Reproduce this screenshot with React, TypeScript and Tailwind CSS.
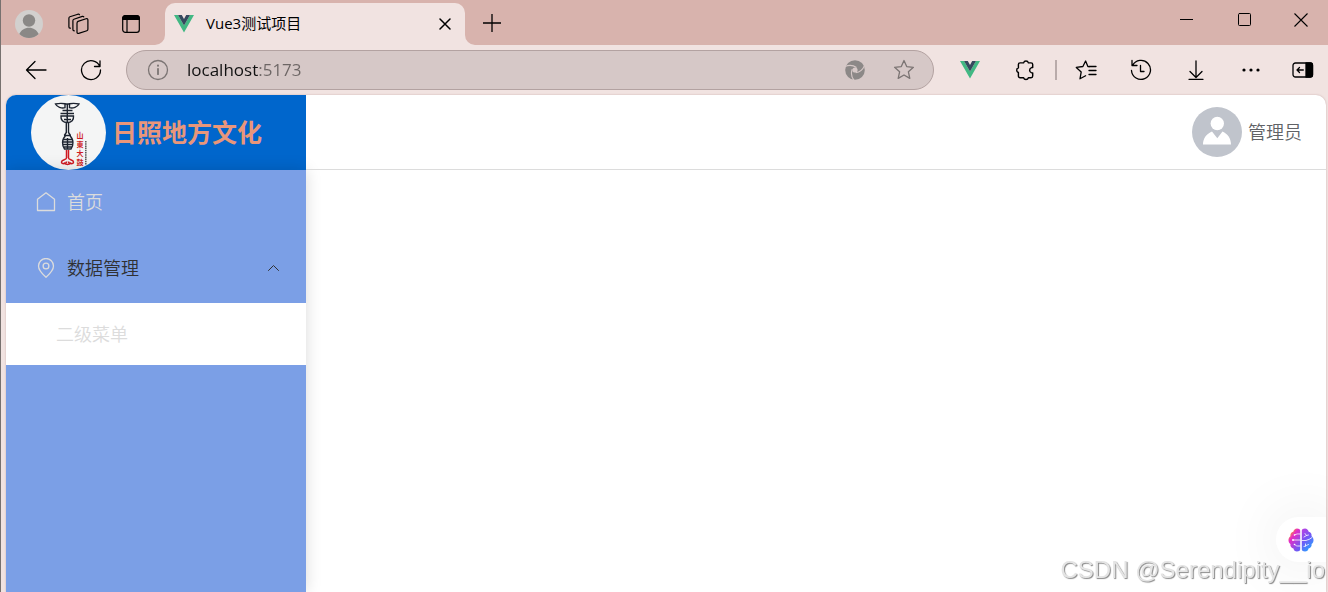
import { useState } from "react";
import type { ReactNode } from "react";

const LINE = {
  fill: "none",
  stroke: "currentColor",
  strokeLinecap: "round" as const,
  strokeLinejoin: "round" as const,
};

function VueLogo() {
  return (
    <svg width="20" height="18" viewBox="0 0 20 18" aria-hidden="true">
      <path d="M0 0h4l6 10.4L16 0h4L10 17.6z" fill="#41b883" />
      <path d="M4 0h3.8L10 3.9 12.2 0H16l-6 10.4z" fill="#35495e" />
    </svg>
  );
}

function WorkspacesIcon() {
  return (
    <svg width="22" height="22" viewBox="0 0 22 22" {...LINE} strokeWidth="1.2">
      <path d="M11 8.4 19 5.700c1-.3 1.900.2 1.900 1.200v9.400c0 .7-.4 1.300-1 1.500l-8.200 2.600c-.8.3-1.700-.2-1.700-1.100V10.200c0-.8.400-1.500 1-1.800z" />
      <path d="M7.300 17.800c-.8 0-1.400-.5-1.400-1.300V7.700c0-.7.4-1.300 1-1.500l8.400-2.800c.6-.2 1.200 0 1.500.4" />
      <path d="M3.400 15.200c-.9 0-1.500-.5-1.500-1.300V5.300c0-.7.4-1.300 1-1.500l8-2.600c.7-.2 1.300 0 1.600.5" />
    </svg>
  );
}

function TabActionsIcon() {
  return (
    <svg width="20" height="20" viewBox="0 0 20 20" {...LINE} strokeWidth="1.200">
      <rect x="1.700" y="1.700" width="16.600" height="16.600" rx="2.600" />
      <path d="M1.700 5.500V4.300a2.600 2.600 0 0 1 2.600-2.600h11.400a2.600 2.600 0 0 1 2.600 2.600v1.200z" fill="currentColor" />
      <path d="M6 6v12" />
    </svg>
  );
}

function ProfileIcon() {
  return (
    <svg width="28" height="28" viewBox="0 0 28 28">
      <circle cx="14" cy="14" r="14" fill="#d2d0ce" />
      <circle cx="14" cy="10.5" r="6.200" fill="#8a8886" />
      <path d="M4.300 24.100c1.700-4 5.400-6.300 9.700-6.300s8 2.300 9.700 6.300A14 14 0 0 1 14 28a14 14 0 0 1-9.700-3.900z" fill="#8a8886" />
    </svg>
  );
}

function SwirlIcon() {
  return (
    <svg width="20" height="20" viewBox="0 0 20 20">
      <circle cx="10" cy="10" r="9.800" fill="#8c8887" />
      <circle cx="10" cy="10" r="2.600" fill="#d6c8c7" />
      <g fill="none" stroke="#d6c8c7" strokeWidth="1.100">
        <path d="M0 6.500c3.500-1.500 8-1.500 11.500 1" />
        <path d="M0 6.500c3.500-1.500 8-1.500 11.500 1" transform="rotate(135 10 10)" />
        <path d="M0 6.500c3.500-1.500 8-1.500 11.500 1" transform="rotate(255 10 10)" />
      </g>
    </svg>
  );
}

function StarIcon() {
  return (
    <svg width="22" height="22" viewBox="0 0 22 22" {...LINE} strokeWidth="1.300">
      <path d="m11 1.500 2.700 6.100 6.700.7-5 4.500 1.400 6.600-5.800-3.400-5.800 3.400 1.400-6.600-5-4.500 6.700-.7z" />
    </svg>
  );
}

function PuzzleIcon() {
  return (
    <svg width="22" height="22" viewBox="0 0 20 20" {...LINE} strokeWidth="1.300">
      <path d="M5.500 3.500h3.200a2.300 2.300 0 0 1 4.400 0h2.400A1.500 1.500 0 0 1 17 5v2.800h-1a2.500 2.500 0 0 0 0 4.800h1v2.900a1.500 1.500 0 0 1-1.500 1.500h-2.400a2.300 2.300 0 0 1-4.400 0H5.500A1.500 1.500 0 0 1 4 15.500v-3.200a2.200 2.200 0 0 1 0-4.200V5a1.500 1.500 0 0 1 1.500-1.500z" />
    </svg>
  );
}

function FavoritesIcon() {
  return (
    <svg width="22" height="22" viewBox="0 0 22 22" {...LINE} strokeWidth="1.300">
      <path d="M14.200 7.600 12.900 7.500 10.600 2 7.900 7.500l-6.600.9 4.900 4.500-1.200 6.900 5.600-3" />
      <path d="M14 7.500h7M14 11.500h7M14 15.500h7" />
    </svg>
  );
}

function HistoryIcon() {
  return (
    <svg width="22" height="22" viewBox="0 0 22 22" {...LINE} strokeWidth="1.300">
      <path d="M1.500 11.500A9.500 9.500 0 1 0 2.600 6.400M2 1.500v5h5" />
      <path d="M10.500 6.500v6h3.500" />
    </svg>
  );
}

function PanelIcon() {
  return (
    <svg width="22" height="16" viewBox="0 0 22 16" {...LINE} strokeWidth="1.300">
      <rect x="1" y="1" width="19.500" height="14" rx="2.400" />
      <path d="M14 1h4.500a2 2 0 0 1 2 2v10a2 2 0 0 1-2 2H14z" fill="currentColor" />
      <path d="M11.300 8H5M7.500 5.500 5 8l2.500 2.500" />
    </svg>
  );
}

function BrainIcon() {
  return (
    <svg width="26" height="26" viewBox="0 0 26 26">
      <defs>
        <linearGradient id="brain-l" x1="0" y1="0" x2="0.700" y2="1">
          <stop offset="0.150" stopColor="#ffa020" />
          <stop offset="0.400" stopColor="#e62cc6" />
          <stop offset="1" stopColor="#6b5cf5" />
        </linearGradient>
        <linearGradient id="brain-r" x1="0" y1="0" x2="0.500" y2="1">
          <stop offset="0" stopColor="#c03fe0" />
          <stop offset="0.500" stopColor="#7557f5" />
          <stop offset="1" stopColor="#2f9bff" />
        </linearGradient>
      </defs>
      <path d="M12.200 3.500v19c0 1.200-1.500 2-3.200 2-2 0-3.300-1.300-3.500-3C3.500 21 2 19.400 2.400 17 1 16 .4 14.500.5 13c0-1.600.6-2.900 1.900-3.800C2 7 3.300 5.200 5.300 4.700 5.700 2.800 7.200 1.500 9 1.500c1.700 0 3.200.8 3.200 2z" fill="url(#brain-l)" />
      <path d="M13.800 3.500v19c0 1.200 1.500 2 3.200 2 2 0 3.300-1.300 3.500-3 2-.5 3.500-2.100 3.100-4.500 1.400-1 2-2.500 1.900-4 0-1.600-.6-2.900-1.900-3.800.4-2.200-.9-4-2.900-4.500-.4-1.900-1.900-3.200-3.700-3.200-1.700 0-3.200.8-3.200 2z" fill="url(#brain-r)" />
      <g fill="none" stroke="#fff" strokeWidth=".8" strokeLinecap="round">
        <path d="M12 7c-2.500 0-2.500-.5-5.500 1M12 13H5M12 19H9.500c-1.500 0-2-1-2.800-1.500" />
        <path d="M17 6.500l1.500 2 2-.5M18.500 8.500 16 10M14 13.500h4l2.500-1M24 10.500l-3 2M16 19.500c2 0 2.500-1.500 4.500-2M17.500 17v2" />
      </g>
      <circle cx="5" cy="13" r=".9" fill="#fff" />
      <circle cx="6.500" cy="8" r=".8" fill="#fff" />
      <circle cx="6.500" cy="17.500" r=".8" fill="#fff" />
    </svg>
  );
}

function SiteLogo() {
  return (
    <svg width="75" height="75" viewBox="0 0 75 75" role="img" aria-label="logo">
      <circle cx="37.500" cy="37.500" r="37.500" fill="#f4f5f5" />
      <g fill="none" stroke="#1d2430" strokeWidth="1.400">
        <path d="M24.500 9c3-.7 7-.7 9.500-.3v4c-3.500 1-8-.7-9.500-3.700zM48 9c-3-.7-7-.7-9.500-.3v4c3.500 1 8-.7 9.500-3.700z" />
        <path d="M34 9h4.500M36.300 9v14M31.500 15.500h10M29.500 18.500h13.500" />
        <path d="M30 21h12.500c.5 4-2 6.500-6.200 6.500S29.500 25 30 21zM33 24.500h7M36.300 21v6.500" />
        <path d="M35.300 28v9.500l-2 3M37.500 28v9.500l2 3M33 40.500h7" />
        <path d="M32.500 44.500h8.500M31.500 47h10.500M31.500 49.500h10M32.500 52h9M34.500 41c-4 3-3.500 10-1 13h6.500c2.500-3 3-10-1-13M36.500 43v11" />
      </g>
      <g fill="none" stroke="#cf1a22" strokeWidth="1.500">
        <path d="M35.500 55v8c0 2-5 1.500-5 4s5 2 5-.5M37.500 55v8c0 2 5 1.500 5 4s-5 2-5-.5" />
        <path d="M33 67.500c1 2.500 6 2.500 7 0" />
      </g>
      <g fill="#cf1a22" fontFamily="'Noto Sans CJK SC', sans-serif" fontSize="7" fontWeight="700" textAnchor="middle">
        <text x="49" y="43">山</text>
        <text x="49" y="52">東</text>
        <text x="49" y="61">大</text>
        <text x="49" y="70">鼓</text>
      </g>
      <path d="M54.800 46v24" stroke="#555" strokeWidth="1.500" strokeDasharray="1.500 .7" />
    </svg>
  );
}

function ToolButton({ label, children }: { label: string; children: ReactNode }) {
  return (
    <button aria-label={label} className="flex h-10 w-[55px] shrink-0 items-center justify-center">
      {children}
    </button>
  );
}

function TitleBar() {
  return (
    <header className="flex h-[45px] items-end bg-[#d8b3ad]">
      <div className="flex h-full items-center pl-[14px]">
        <button aria-label="Profile" className="mt-[3px]"><ProfileIcon /></button>
        <button aria-label="Workspaces" className="mt-[3px] ml-6"><WorkspacesIcon /></button>
        <button aria-label="Tab actions" className="mt-[3px] ml-8"><TabActionsIcon /></button>
      </div>
      <div className="ml-[14px] flex h-[42px] items-end">
        <svg width="10" height="10" viewBox="0 0 10 10" fill="#f1e3e1">
          <path d="M10 0v10H0A10 10 0 0 0 10 0z" />
        </svg>
        <div className="flex h-full w-[300px] items-center rounded-t-[10px] bg-[#f1e3e1] pr-3 pb-px pl-[9px]">
          <VueLogo />
          <span className="ml-3 flex-1 text-[15px] text-black">Vue3测试项目</span>
          <button aria-label="Close tab" className="flex size-4 items-center justify-center">
            <svg width="12" height="12" viewBox="0 0 12 12" {...LINE} strokeWidth="1.500">
              <path d="M1 1l10 10M11 1 1 11" />
            </svg>
          </button>
        </div>
        <svg width="10" height="10" viewBox="0 0 10 10" fill="#f1e3e1">
          <path d="M0 0v10h10A10 10 0 0 1 0 0z" />
        </svg>
      </div>
      <button aria-label="New tab" className="ml-2 flex h-[45px] items-center">
        <svg width="18" height="18" viewBox="0 0 18 18" stroke="currentColor" strokeWidth="1.300">
          <path d="M0 9h18M9 0v18" />
        </svg>
      </button>
      <div className="ml-auto flex h-10 items-center self-start">
        <button aria-label="Minimize" className="flex w-[58px] justify-center">
          <svg width="14" height="14" viewBox="0 0 14 14" stroke="currentColor"><path d="M0 6.500h13" /></svg>
        </button>
        <button aria-label="Maximize" className="flex w-[58px] justify-center">
          <svg width="14" height="14" viewBox="0 0 14 14" {...LINE} strokeWidth="1">
            <rect x=".5" y=".5" width="12" height="12" rx="1" />
          </svg>
        </button>
        <button aria-label="Close" className="flex w-[54px] justify-center">
          <svg width="14" height="14" viewBox="0 0 14 14" stroke="currentColor" strokeWidth="1.100">
            <path d="M.5.5l13 13M13.500.5l-13 13" />
          </svg>
        </button>
      </div>
    </header>
  );
}

function Toolbar() {
  const [url, setUrl] = useState("localhost:5173");

  return (
    <div className="flex h-[50px] items-center pl-[7px]">
      <ToolButton label="Back">
        <svg width="22" height="20" viewBox="0 0 22 20" {...LINE} strokeWidth="1.300">
          <path d="M21 10H1.500M10 1.500 1.500 10l8.500 8.500" />
        </svg>
      </ToolButton>
      <ToolButton label="Refresh">
        <svg width="22" height="22" viewBox="0 0 22 22" {...LINE} strokeWidth="1.300">
          <path d="M19.800 7.500A9.500 9.500 0 1 0 20.500 11M20 1.800v5.700h-5.500" />
        </svg>
      </ToolButton>
      <div className="ml-2 flex h-10 min-w-0 flex-1 items-center rounded-full border border-[#b3a2a1] bg-[#d6c8c7] px-5 text-[#7b7473]">
        <svg width="22" height="22" viewBox="0 0 22 22" {...LINE} strokeWidth="1.300" className="shrink-0">
          <circle cx="11" cy="11" r="9.500" />
          <path d="M11 9.800v5.400" strokeWidth="1.800" />
          <path d="M11 6.600v.2" strokeWidth="2" />
        </svg>
        <input
          aria-label="Address"
          value={url}
          onChange={(e) => setUrl(e.target.value)}
          className="mx-[18px] min-w-0 flex-1 bg-[linear-gradient(90deg,#111_71px,#6c6564_71px)] bg-clip-text text-[17px] text-transparent outline-none"
        />
        <button aria-label="Shopping" className="mr-7 shrink-0"><SwirlIcon /></button>
        <button aria-label="Add to favorites" className="-mr-2 shrink-0 pr-[6px]"><StarIcon /></button>
      </div>
      <div className="ml-2 flex items-center">
        <ToolButton label="Vue devtools"><VueLogo /></ToolButton>
        <ToolButton label="Extensions"><PuzzleIcon /></ToolButton>
        <span className="mr-px ml-[3px] h-5 w-[2px] bg-[#b9abaa]" />
        <ToolButton label="Favorites"><FavoritesIcon /></ToolButton>
        <ToolButton label="History"><HistoryIcon /></ToolButton>
        <ToolButton label="Downloads">
          <svg width="18" height="20" viewBox="0 0 18 20" {...LINE} strokeWidth="1.300">
            <path d="M9 1v16M3 11.500l6 6 6-6M2 19.300h14" />
          </svg>
        </ToolButton>
        <ToolButton label="Settings">
          <svg width="18" height="4" viewBox="0 0 18 4" fill="currentColor">
            <circle cx="2" cy="2" r="1.600" />
            <circle cx="9" cy="2" r="1.600" />
            <circle cx="16" cy="2" r="1.600" />
          </svg>
        </ToolButton>
        <button aria-label="Sidebar" className="flex h-10 w-[50px] items-center justify-center"><PanelIcon /></button>
      </div>
    </div>
  );
}

function Sidebar() {
  const [open, setOpen] = useState(true);

  return (
    <aside className="flex w-[300px] shrink-0 flex-col">
      <div className="flex h-[75px] items-center gap-[6px] bg-[#0066cc] pl-[25px]">
        <SiteLogo />
        <h1 className="text-[25px] font-bold text-[#e9967a]">日照地方文化</h1>
      </div>
      <nav className="flex-1 bg-[#7b9fe6] text-lg font-[350] text-[#dcdcdc] shadow-[0_0_15px_rgba(0,0,0,0.15)]">
        <ul>
          <li>
            <a href="#home" className="flex h-[66px] items-center gap-[11px] px-[30px] pb-[3px]">
              <svg width="20" height="20" viewBox="0 0 20 20" {...LINE} strokeWidth="1.300">
                <path d="M1.500 18.500V7.300L10 .8l8.500 6.500v11.200z" />
              </svg>
              首页
            </a>
          </li>
          <li>
            <button
              onClick={() => setOpen(!open)}
              aria-expanded={open}
              className="flex h-[67px] w-full items-center gap-[11px] pr-[26px] pb-[3px] pl-[30px] text-left"
            >
              <svg width="20" height="20" viewBox="0 0 20 20" {...LINE} strokeWidth="1.300">
                <path d="M10 19.200C4.600 14.500 2.500 11.300 2.500 8a7.500 7.500 0 0 1 15 0c0 3.300-2.100 6.500-7.500 11.200z" />
                <circle cx="10" cy="8" r="2.900" />
              </svg>
              <span className="flex-1 text-[#303133]">数据管理</span>
              <svg width="13" height="8" viewBox="0 0 13 8" {...LINE} strokeWidth="1" className="text-[#303133]">
                <path d={open ? "M1.500 6.500l5-5 5 5" : "M1.500 1.500l5 5 5-5"} />
              </svg>
            </button>
            {open && (
              <ul className="bg-white">
                <li>
                  <a href="#sub" className="flex h-[62px] items-center pl-[50px]">二级菜单</a>
                </li>
              </ul>
            )}
          </li>
        </ul>
      </nav>
    </aside>
  );
}

function UserAvatar() {
  return (
    <svg width="50" height="50" viewBox="0 0 50 50">
      <circle cx="25" cy="25" r="25" fill="#c0c4cc" />
      <circle cx="25.300" cy="16.500" r="6.700" fill="#fff" />
      <path d="M11 37.500c0-6 3.500-10.700 9-13l5.300 6.700 5.200-6.700c5.200 2.300 8.500 7 8.500 13z" fill="#fff" />
    </svg>
  );
}

export default function App() {
  return (
    <div className="flex min-h-screen flex-col border-l border-[#77716f] bg-[#f1e3e1] font-['Open_Sans','Noto_Sans_CJK_SC',sans-serif] text-black">
      <TitleBar />
      <Toolbar />
      <div className="mr-[2px] ml-[5px] flex flex-1 overflow-hidden rounded-t-[10px] bg-white shadow-[0_0_2px_rgba(120,70,70,0.35)]">
        <Sidebar />
        <main className="min-w-0 flex-1">
          <div className="flex h-[75px] items-center justify-end border-b border-[#dcdcdc] pr-6">
            <button className="flex items-center gap-[6px] text-lg font-[350] text-[#606266]">
              <UserAvatar />
              管理员
            </button>
          </div>
        </main>
      </div>

      <button
        aria-label="Assistant"
        className="fixed right-[2px] bottom-[30px] flex h-[45px] w-[50px] items-center rounded-l-full bg-white pl-3 shadow-[0_0_60px_rgba(0,0,0,0.1)]"
      >
        <BrainIcon />
      </button>
      <span className="pointer-events-none fixed right-[3px] bottom-[6px] font-['Liberation_Sans',sans-serif] text-2xl leading-8 text-[#e4e4e4] [text-shadow:1px_1px_1px_#888]">
        CSDN @Serendipity__io
      </span>
    </div>
  );
}
